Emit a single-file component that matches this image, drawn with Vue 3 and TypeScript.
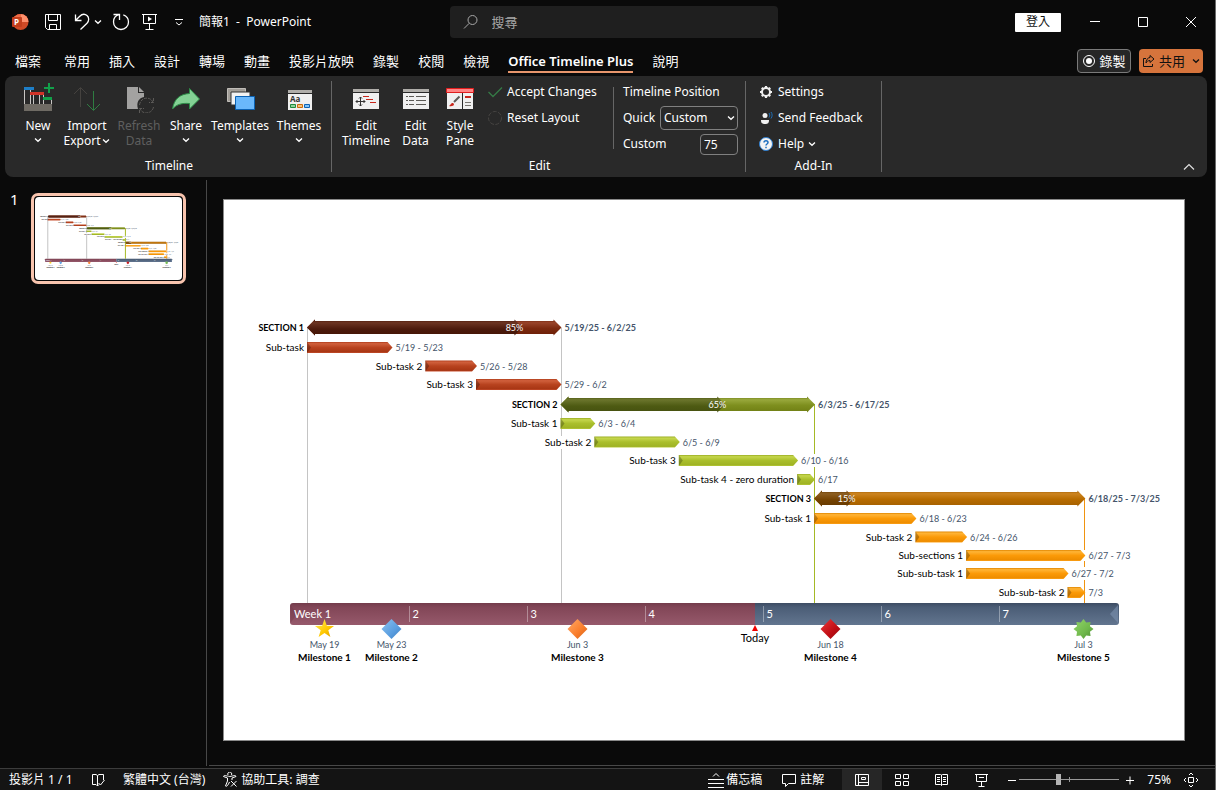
<script setup lang="ts">
import { ref } from 'vue'

interface Bar {
  label: string
  dates: string
  start: number
  days: number
  y: number
  tone: 'red' | 'green' | 'orange'
  done?: number
}

interface Milestone {
  title: string
  date: string
  x: number
  shape: string
  fill: string
}

const tabs = ['常用', '插入', '設計', '轉場', '動畫', '投影片放映', '錄製', '校閱', '檢視', 'Office Timeline Plus', '說明']
const activeTab = ref('Office Timeline Plus')
const search = ref('')
const quick = ref('Custom')
const position = ref('75')
const zoom = ref(39)

const dayWidth = 16.9
const originX = 83
const dayX = (day: number): number => originX + day * dayWidth
const endX = (b: Bar): number => dayX(b.start + b.days) + 1

const bars: Bar[] = [
  { label: 'SECTION 1', dates: '5/19/25 - 6/2/25', start: 0, days: 15, y: 127.5, tone: 'red', done: 0.85 },
  { label: 'Sub-task', dates: '5/19 - 5/23', start: 0, days: 5, y: 147.5, tone: 'red' },
  { label: 'Sub-task 2', dates: '5/26 - 5/28', start: 7, days: 3, y: 166, tone: 'red' },
  { label: 'Sub-task 3', dates: '5/29 - 6/2', start: 10, days: 5, y: 184.5, tone: 'red' },
  { label: 'SECTION 2', dates: '6/3/25 - 6/17/25', start: 15, days: 15, y: 204.5, tone: 'green', done: 0.65 },
  { label: 'Sub-task 1', dates: '6/3 - 6/4', start: 15, days: 2, y: 223.5, tone: 'green' },
  { label: 'Sub-task 2', dates: '6/5 - 6/9', start: 17, days: 5, y: 242, tone: 'green' },
  { label: 'Sub-task 3', dates: '6/10 - 6/16', start: 22, days: 7, y: 260.5, tone: 'green' },
  { label: 'Sub-task 4 - zero duration', dates: '6/17', start: 29, days: 1, y: 279.5, tone: 'green' },
  { label: 'SECTION 3', dates: '6/18/25 - 7/3/25', start: 30, days: 16, y: 298.5, tone: 'orange', done: 0.15 },
  { label: 'Sub-task 1', dates: '6/18 - 6/23', start: 30, days: 6, y: 318.5, tone: 'orange' },
  { label: 'Sub-task 2', dates: '6/24 - 6/26', start: 36, days: 3, y: 337, tone: 'orange' },
  { label: 'Sub-sections 1', dates: '6/27 - 7/3', start: 39, days: 7, y: 355.5, tone: 'orange' },
  { label: 'Sub-sub-task 1', dates: '6/27 - 7/2', start: 39, days: 6, y: 373.5, tone: 'orange' },
  { label: 'Sub-sub-task 2', dates: '7/3', start: 45, days: 1, y: 392.5, tone: 'orange' },
]

const guides = [
  { x: 83.5, tone: 'gray', spans: [[128, 403]] },
  { x: 337.5, tone: 'gray', spans: [[128, 236], [249, 403]] },
  { x: 590.5, tone: 'green', spans: [[204, 254], [267, 403]] },
  { x: 860.5, tone: 'orange', spans: [[298, 350], [361, 367], [380, 403]] },
]

const weeks = ['2', '3', '4', '5', '6', '7'].map((label, i) => ({ label, x: 185.5 + i * 118 }))

const diamond = 'M0 -10 L10 0 L0 10 L-10 0 Z'
const milestones: Milestone[] = [
  { title: 'Milestone 1', date: 'May 19', x: 100.5, shape: polygon(5, 10, 4), fill: 'url(#ms-gold)' },
  { title: 'Milestone 2', date: 'May 23', x: 167.5, shape: diamond, fill: 'url(#ms-blue)' },
  { title: 'Milestone 3', date: 'Jun 3', x: 353.5, shape: diamond, fill: 'url(#ms-orange)' },
  { title: 'Milestone 4', date: 'Jun 18', x: 606.5, shape: diamond, fill: 'url(#ms-red)' },
  { title: 'Milestone 5', date: 'Jul 3', x: 859.5, shape: polygon(8, 10, 7), fill: 'url(#ms-green)' },
]

function polygon(points: number, outer: number, inner: number): string {
  const parts: string[] = []
  for (let i = 0; i < points * 2; i++) {
    const r = i % 2 === 0 ? outer : inner
    const a = (Math.PI * i) / points - Math.PI / 2
    parts.push(`${(Math.cos(a) * r).toFixed(2)} ${(Math.sin(a) * r).toFixed(2)}`)
  }
  return `M${parts.join(' L')} Z`
}

function arrow(x1: number, x2: number, y: number): string {
  return `M${x1} ${y} L${x1 + 8} ${y - 8} V${y - 6.5} H${x2 - 8} V${y - 8} L${x2} ${y} L${x2 - 8} ${y + 8} V${y + 6.5} H${x1 + 8} V${y + 8} Z`
}

function barShape(b: Bar): string {
  const x1 = dayX(b.start)
  const x2 = endX(b)
  if (b.done !== undefined) return arrow(x1, x2, b.y)
  return `M${x1} ${b.y - 5.5} H${x2 - 5} L${x2} ${b.y} L${x2 - 5} ${b.y + 5.5} H${x1} Z`
}

function doneX(b: Bar): number {
  return dayX(b.start) + b.days * dayWidth * (b.done ?? 0)
}
</script>

<template>
  <div class="window">
    <svg class="defs" width="0" height="0" aria-hidden="true">
      <symbol id="chev" viewBox="0 0 8 6"><path d="M1 1.5 L4 4.3 L7 1.5" fill="none" stroke="currentColor" stroke-width="1.3" /></symbol>
    </svg>

    <header class="titlebar">
      <div class="quick-access">
        <svg class="logo" viewBox="0 0 18 18">
          <circle cx="9.500" cy="9" r="8" fill="#d04a26" />
          <path d="M9.500 1 A8 8 0 0 1 17.500 9 H9.500 Z" fill="#ff8f6b" />
          <path d="M1.500 9 A8 8 0 0 1 9.500 1 V9 Z" fill="#ed6c47" />
          <rect x="1" y="4" width="10" height="10" rx="1" fill="#c43e1c" />
          <text x="3" y="12" class="logo-letter">P</text>
        </svg>
        <button class="qa" aria-label="儲存"><svg viewBox="0 0 18 18" class="i18"><path d="M1.500 1.500 H16.500 V16.500 H3.500 L1.500 14.500 Z M4.500 1.500 V7.500 H13.500 V1.500 M5.500 16.500 V11.500 H12.500 V16.500" /></svg></button>
        <button class="qa" aria-label="復原"><svg viewBox="0 0 18 18" class="i18 bold"><path d="M2.500 1.500 V7.500 H8.500 M2.500 7.500 L6.500 3.500 C9 1 12 0.800 14 2.600 C16.300 4.600 16.200 7.800 14 10.200 L7.500 16.500" /></svg></button>
        <button class="qa narrow" aria-label="復原選項"><svg class="chev"><use href="#chev" /></svg></button>
        <button class="qa" aria-label="重複"><svg viewBox="0 0 18 18" class="i18 bold"><path d="M1.500 1.500 H7.500 V7 M7.300 1.700 C3.500 2.500 1.500 5.500 1.500 9 C1.500 13.200 4.800 16.500 9 16.500 C13.200 16.500 16.500 13.200 16.500 9 C16.500 5.600 14.500 2.900 11.300 1.800" /></svg></button>
        <button class="qa" aria-label="從首張投影片開始"><svg viewBox="0 0 18 18" class="i18"><path d="M1 1.500 H16 M2.500 1.500 V10.500 H14.500 V1.500 M8.500 10.500 V16.500 M4.500 16.500 H12.500" /><path class="solid" d="M7 3.500 L11 6 L7 8.500 Z" /></svg></button>
        <button class="qa" aria-label="自訂快速存取工具列"><svg viewBox="0 0 18 18" class="i18"><path d="M5 6.500 H13 M6 9.500 L9 12 L12 9.500" /></svg></button>
        <span class="doc">簡報1&nbsp; -&nbsp; PowerPoint</span>
      </div>
      <label class="search">
        <svg viewBox="0 0 16 16" class="i16"><circle cx="9.500" cy="6" r="4.500" /><path d="M6.200 9.300 L1 14.500" /></svg>
        <input v-model="search" type="text" placeholder="搜尋" aria-label="搜尋" />
      </label>
      <div class="window-controls">
        <button class="signin">登入</button>
        <button class="wc" aria-label="最小化"><svg viewBox="0 0 12 12"><path d="M1 5.500 H11" /></svg></button>
        <button class="wc" aria-label="最大化"><svg viewBox="0 0 12 12"><path d="M1.500 1.500 H10.500 V10.500 H1.500 Z" /></svg></button>
        <button class="wc" aria-label="關閉"><svg viewBox="0 0 12 12"><path d="M1 1 L11 11 M11 1 L1 11" /></svg></button>
      </div>
    </header>

    <nav class="tabs">
      <button class="tab file">檔案</button>
      <button v-for="t in tabs" :key="t" class="tab" :class="{ active: t === activeTab }" @click="activeTab = t">{{ t }}</button>
      <span class="grow"></span>
      <button class="record"><svg viewBox="0 0 14 14"><circle cx="7" cy="7" r="5.500" fill="none" stroke="#fff" /><circle cx="7" cy="7" r="3" fill="#fff" /></svg>錄製</button>
      <button class="share-btn">
        <svg viewBox="0 0 14 14"><path d="M4 4.500 H1.500 V12.500 H10.500 V10 M8 1.500 L12 5 L8 8.500 V6.500 C6 6.500 4.800 7.500 4 9 C4 6 5.500 3.800 8 3.500 Z" fill="none" stroke="#111" /></svg>共用<svg class="chev"><use href="#chev" /></svg>
      </button>
    </nav>

    <section class="ribbon">
      <div class="group timeline">
        <div class="tools">
          <button class="big w48">
            <svg viewBox="0 0 32 30">
              <path d="M2.500 7 V21 M11.500 12 V21 M17.500 12 V21 M8.500 7 V21 M29.500 17 V21 M21.500 12 V21" stroke="#c8c6c4" fill="none" />
              <path d="M2 4 H12 V7 H2 Z" fill="#1e7fc8" /><path d="M8 9 H22 V12 H8 Z" fill="#d13428" /><path d="M21 14 H30 V17 H21 Z" fill="#12a04a" />
              <path d="M2 21 H30 V28 H2 Z" fill="#6f6b64" /><path d="M27 0 V10 M22 5 H32" stroke="#12a04a" stroke-width="2" />
            </svg>
            <span>New</span><svg class="chev"><use href="#chev" /></svg>
          </button>
          <button class="big w50">
            <svg viewBox="0 0 32 30"><path d="M3 11 L9.500 4.500 L16 11 M9.500 5 V24" stroke="#45423f" fill="none" /><path d="M22.500 8 V27 M16 21 L22.500 27.500 L29 21" stroke="#2f7d42" fill="none" /></svg>
            <span>Import</span><span class="pair">Export<svg class="chev"><use href="#chev" /></svg></span>
          </button>
          <button class="big w54" disabled>
            <svg viewBox="0 0 32 30"><path d="M4 4 H15 V10 H21 V14 C16 15 13 19 15 26 H4 Z" fill="#a3a2a1" /><path d="M16 4 L21 9 H16 Z" fill="#a3a2a1" /><path d="M16.500 22 C17.500 14 27 13 30 19 M30.500 15 V19.500 H26 M30.500 24 C29 31 20 32 17 26 M16.500 30 V25.500 H21" fill="none" stroke="#5c5a58" stroke-dasharray="3 1" /></svg>
            <span>Refresh</span><span>Data</span>
          </button>
          <button class="big w40">
            <svg viewBox="0 0 32 30"><path d="M2.500 26 C4 16 10 11 19.500 10.500 V5.500 L29.500 16 L19.500 26 V20.500 C12 20 7 21 2.500 26 Z" fill="#83d194" stroke="#2c8c47" /></svg>
            <span>Share</span><svg class="chev"><use href="#chev" /></svg>
          </button>
          <button class="big w68">
            <svg viewBox="0 0 32 30"><path d="M3.500 5.500 H21.500 V18.500 H3.500 Z" fill="#a29e98" stroke="#c0bdb8" /><path d="M7 9 H26 V22 H7 Z" fill="#f2f2f2" stroke="#333" /><path d="M11.500 13.500 H30.500 V26.500 H11.500 Z" fill="#6ab8fb" stroke="#0b62b4" /></svg>
            <span>Templates</span><svg class="chev"><use href="#chev" /></svg>
          </button>
          <button class="big w50">
            <svg viewBox="0 0 32 30"><path d="M5 7 H29 V10 H5 Z" fill="#b0aeaa" /><path d="M5 11 H29 V27 H5 Z" fill="#f0f0f0" /><text x="7" y="19" class="aa">Aa</text><path d="M7.500 21.500 H12.500 V24.500 H7.500 Z" fill="#8ed29b" stroke="#1f8b3d" /><path d="M14.500 21.500 H19.500 V24.500 H14.500 Z" fill="#f4c47e" stroke="#c96a0c" /><path d="M21.500 21.500 H26.500 V24.500 H21.500 Z" fill="#83c3f7" stroke="#0b62b4" /></svg>
            <span>Themes</span><svg class="chev"><use href="#chev" /></svg>
          </button>
        </div>
        <div class="caption">Timeline</div>
      </div>

      <div class="group edit">
        <div class="tools">
          <button class="big w50">
            <svg viewBox="0 0 32 30"><path d="M3 6 H29 V9 H3 Z" fill="#b0aeaa" /><path d="M3 10 H29 V26 H3 Z" fill="#f0f0f0" /><path d="M6 18.500 H15 M10.500 14 V23 M7.500 17 L6 18.500 L7.500 20 M13.500 17 L15 18.500 L13.500 20 M9 15.500 L10.500 14 L12 15.500 M9 21.500 L10.500 23 L12 21.500" stroke="#333" fill="none" /><path d="M13 13.500 H19 M16 16.500 H23 M20 19.500 H26" stroke="#c8261b" /></svg>
            <span>Edit</span><span>Timeline</span>
          </button>
          <button class="big w49">
            <svg viewBox="0 0 32 30"><path d="M3 6 H29 V9 H3 Z" fill="#b0aeaa" /><path d="M3 10 H29 V26 H3 Z" fill="#f0f0f0" /><path d="M6 13.500 H8 M6 17.500 H8 M6 21.500 H8 M9 13.500 H14 M9 17.500 H14 M9 21.500 H14 M16 13.500 H26 M16 17.500 H26 M16 21.500 H26" stroke="#5c5a56" /></svg>
            <span>Edit</span><span>Data</span>
          </button>
          <button class="big w40">
            <svg viewBox="0 0 32 30"><path d="M3 10 H18 V26 H3 Z M19 10 H29 V26 H19 Z" fill="#f0f0f0" /><path d="M2.500 5.500 H29.500 V9.500 H2.500 Z" fill="#ff8585" stroke="#e01e1e" /><path d="M10 19 L15.500 13.500" stroke="#5c5a56" stroke-width="2" /><path d="M5 23 C7 22 6.500 20 9 20 C11 21 10 24 5 23 Z" fill="#c8261b" /><path d="M21 14 H27" stroke="#c8261b" stroke-width="2" /><path d="M21 19.500 H27 M21 22.500 H27" stroke="#77746f" /></svg>
            <span>Style</span><span>Pane</span>
          </button>
          <div class="rows">
            <button class="small"><svg viewBox="0 0 16 16"><path d="M1.500 8 L6 12.500 L15 3.500" fill="none" stroke="#357a46" stroke-width="1.300" /></svg>Accept Changes</button>
            <button class="small"><svg viewBox="0 0 16 16"><circle cx="8" cy="8" r="6.500" fill="none" stroke="#464442" stroke-dasharray="4 1.500" /></svg>Reset Layout</button>
          </div>
          <div class="position">
            <div class="prow">Timeline Position</div>
            <div class="prow">
              <label for="quick">Quick</label>
              <span class="select"><select id="quick" v-model="quick"><option>Custom</option></select><svg class="chev"><use href="#chev" /></svg></span>
            </div>
            <div class="prow"><label for="custom">Custom</label><input id="custom" v-model="position" type="text" /></div>
          </div>
        </div>
        <div class="caption">Edit</div>
      </div>

      <div class="group addin">
        <div class="rows">
          <button class="small"><svg viewBox="0 0 16 16"><circle cx="8" cy="8" r="4" fill="none" stroke="#f0f0f0" stroke-width="2" /><path d="M8 2 V4 M8 12 V14 M2 8 H4 M12 8 H14 M3.800 3.800 L5.200 5.200 M10.800 10.800 L12.200 12.200 M12.200 3.800 L10.800 5.200 M5.200 10.800 L3.800 12.200" stroke="#f0f0f0" stroke-width="2.200" /></svg>Settings</button>
          <button class="small"><svg viewBox="0 0 16 16"><circle cx="7" cy="5.500" r="2.500" fill="#f0f0f0" /><path d="M3 10 H11 C11 13 10 14 7 14 C4 14 3 13 3 10 Z" fill="#f0f0f0" /><path d="M11 3 C12 4.500 12 6 11 7.500 M13 2 C14.500 4 14.500 6.500 13 8.500" fill="none" stroke="#1e6fb8" /></svg>Send Feedback</button>
          <button class="small"><svg viewBox="0 0 16 16"><circle cx="8" cy="8" r="6.500" fill="#f4f4f4" stroke="#2b7cd0" /><path d="M6 6.500 C6 4 10 4 10 6.500 C10 8 8 8 8 9.500 M8 10.800 V12.200" fill="none" stroke="#1e6fc0" stroke-width="1.500" /></svg>Help<svg class="chev"><use href="#chev" /></svg></button>
        </div>
        <div class="caption">Add-In</div>
      </div>
      <button class="collapse" aria-label="摺疊功能區"><svg viewBox="0 0 12 8"><path d="M1 6.500 L6 1.500 L11 6.500" fill="none" stroke="#e0e0e0" stroke-width="1.200" /></svg></button>
    </section>

    <main class="workspace">
      <aside class="slides">
        <span class="number">1</span>
        <button class="thumb" aria-label="投影片 1"><svg viewBox="0 0 960 540"><use href="#slide-art" /></svg></button>
      </aside>
      <div class="stage">
        <div class="slide">
          <svg viewBox="0 0 960 540" role="img" aria-label="專案時程">
            <defs>
              <linearGradient id="bar-red" x2="0" y2="1"><stop offset="0" stop-color="#b13d1b" /><stop offset=".15" stop-color="#d0603c" /><stop offset=".5" stop-color="#b8431f" /><stop offset=".9" stop-color="#a83614" /><stop offset="1" stop-color="#c85030" /></linearGradient>
              <linearGradient id="bar-green" x2="0" y2="1"><stop offset="0" stop-color="#9aad22" /><stop offset=".15" stop-color="#c5d64c" /><stop offset=".5" stop-color="#aabf2c" /><stop offset=".9" stop-color="#9fb324" /><stop offset="1" stop-color="#b9cc3c" /></linearGradient>
              <linearGradient id="bar-orange" x2="0" y2="1"><stop offset="0" stop-color="#e08600" /><stop offset=".15" stop-color="#ffb436" /><stop offset=".5" stop-color="#fb9a08" /><stop offset=".9" stop-color="#ee8d00" /><stop offset="1" stop-color="#ffa51e" /></linearGradient>
              <linearGradient id="sec-red" x2="0" y2="1"><stop offset="0" stop-color="#6e2008" /><stop offset=".2" stop-color="#98442a" /><stop offset=".55" stop-color="#7c2a10" /><stop offset="1" stop-color="#6b1e06" /></linearGradient>
              <linearGradient id="sec-green" x2="0" y2="1"><stop offset="0" stop-color="#6c7a14" /><stop offset=".2" stop-color="#98a83c" /><stop offset=".55" stop-color="#7e8f1e" /><stop offset="1" stop-color="#6f7e14" /></linearGradient>
              <linearGradient id="sec-orange" x2="0" y2="1"><stop offset="0" stop-color="#a05c00" /><stop offset=".2" stop-color="#cc8420" /><stop offset=".55" stop-color="#b86c00" /><stop offset="1" stop-color="#a35f00" /></linearGradient>
              <linearGradient id="done-red" x2="0" y2="1"><stop offset="0" stop-color="#461405" /><stop offset=".2" stop-color="#6c3422" /><stop offset=".6" stop-color="#4c1a0c" /><stop offset="1" stop-color="#451606" /></linearGradient>
              <linearGradient id="done-green" x2="0" y2="1"><stop offset="0" stop-color="#48500c" /><stop offset=".2" stop-color="#6b752c" /><stop offset=".6" stop-color="#4d5a12" /><stop offset="1" stop-color="#465010" /></linearGradient>
              <linearGradient id="done-orange" x2="0" y2="1"><stop offset="0" stop-color="#633800" /><stop offset=".2" stop-color="#8d5e20" /><stop offset=".6" stop-color="#744200" /><stop offset="1" stop-color="#653900" /></linearGradient>
              <linearGradient id="band-past" x2="0" y2="1"><stop offset="0" stop-color="#733c4b" /><stop offset=".2" stop-color="#824657" /><stop offset="1" stop-color="#96596b" /></linearGradient>
              <linearGradient id="band-next" x2="0" y2="1"><stop offset="0" stop-color="#3d4c63" /><stop offset=".2" stop-color="#4b5d76" /><stop offset="1" stop-color="#62758f" /></linearGradient>
              <linearGradient id="ms-gold" x2="1" y2="1"><stop offset="0" stop-color="#fff05a" /><stop offset=".6" stop-color="#ffc800" /><stop offset="1" stop-color="#d89a00" /></linearGradient>
              <linearGradient id="ms-blue" x2="1" y2="1"><stop offset="0" stop-color="#8cc2f0" /><stop offset=".6" stop-color="#5a9ee0" /><stop offset="1" stop-color="#3f7fc0" /></linearGradient>
              <linearGradient id="ms-orange" x2="1" y2="1"><stop offset="0" stop-color="#ffab6a" /><stop offset=".6" stop-color="#fa7d2a" /><stop offset="1" stop-color="#d0601a" /></linearGradient>
              <linearGradient id="ms-red" x2="1" y2="1"><stop offset="0" stop-color="#ea3a3a" /><stop offset=".6" stop-color="#c00d14" /><stop offset="1" stop-color="#8c0a0e" /></linearGradient>
              <linearGradient id="ms-green" x2="1" y2="1"><stop offset="0" stop-color="#92d66a" /><stop offset=".6" stop-color="#70b84c" /><stop offset="1" stop-color="#4e9034" /></linearGradient>
            </defs>
            <g id="slide-art">
              <g v-for="g in guides" :key="g.x">
                <line v-for="s in g.spans" :key="s[0]" :x1="g.x" :x2="g.x" :y1="s[0]" :y2="s[1]" :class="['guide', g.tone]" />
              </g>
              <g v-for="b in bars" :key="b.y">
                <path :d="barShape(b)" :fill="b.done ? `url(#sec-${b.tone})` : `url(#bar-${b.tone})`" />
                <template v-if="b.done">
                  <path :d="arrow(dayX(b.start), doneX(b), b.y)" :fill="`url(#done-${b.tone})`" />
                  <text class="percent" :x="doneX(b) - 8" :y="b.y + 3.5">{{ b.done * 100 }}%</text>
                </template>
                <path v-else class="bevel" :d="`M${dayX(b.start)} ${b.y - 5.5} l4 5.5 l-4 5.5 z`" />
                <text class="label" :class="{ strong: b.done }" :x="dayX(b.start) - 3" :y="b.y + 3.5">{{ b.label }}</text>
                <text class="dates" :class="{ strong: b.done }" :x="endX(b) + 3" :y="b.y + 3.5">{{ b.dates }}</text>
              </g>
              <path d="M69 403 H532 V425 H69 Q66 425 66 422 V406 Q66 403 69 403 Z" fill="url(#band-past)" />
              <path d="M66.500 405 L73 414 L66.500 423 Z" fill="#6d3746" opacity=".35" />
              <path d="M531 403 H892 Q895 403 895 406 V422 Q895 425 892 425 H531 Z" fill="url(#band-next)" />
              <path d="M894 405 L886 414 L894 423 Z" fill="#7d92b0" opacity=".6" />
              <text class="week" x="70" y="418">Week 1</text>
              <g v-for="w in weeks" :key="w.label">
                <line :x1="w.x" :x2="w.x" y1="406" y2="422" class="tick" />
                <text class="week" :x="w.x + 3" y="418">{{ w.label }}</text>
              </g>
              <path d="M531 425 L534 431 H528 Z" fill="#f00000" />
              <text class="today" x="531" y="442">Today</text>
              <g v-for="m in milestones" :key="m.title">
                <path :d="m.shape" :transform="`translate(${m.x} 429)`" :fill="m.fill" />
                <text class="ms-date" :x="m.x" y="448">{{ m.date }}</text>
                <text class="ms-title" :x="m.x" y="461">{{ m.title }}</text>
              </g>
            </g>
          </svg>
        </div>
      </div>
    </main>

    <footer class="status">
      <span class="s-page">投影片 1 / 1</span>
      <button class="s-icon" aria-label="校對"><svg viewBox="0 0 16 16"><path d="M7.500 3.500 L6 2.500 H2.500 V12.500 H6 L7.500 14 L9 12.500 M7.500 3.500 V14 M7.500 3.500 L9 2.500 H13.500 V8 M8.500 11 L10.500 13 L14.500 8" /></svg></button>
      <button class="s-text">繁體中文 (台灣)</button>
      <button class="s-text access"><svg viewBox="0 0 16 16"><path d="M6 3 A2 2 0 1 1 9.500 3 M1.500 4.500 L5.500 6 V9 L3.500 14 M14 4.500 L10 6 V8 M1.500 4.500 C2 2.500 4 4 7.800 4.500 C11.500 4 13.500 2.500 14 4.500 M3.500 14 C5 15 6 13 7.500 10 M9 9 L14.500 14.500 M14.500 9 L9 14.500" /></svg>協助工具: 調查</button>
      <span class="grow"></span>
      <button class="s-text notes"><svg viewBox="0 0 16 16"><path d="M5 4.500 L8 1.500 L11 4.500 M0 7.500 H16 M0 11.500 H16 M0 15.500 H16" /></svg>備忘稿</button>
      <button class="s-text comments"><svg viewBox="0 0 16 16"><path d="M1.500 2.500 H14.500 V11.500 H7.500 L4.500 14.500 V11.500 H1.500 Z" /></svg>註解</button>
      <div class="views">
        <button class="view on" aria-label="標準模式"><svg viewBox="0 0 16 16"><path d="M1.500 2.500 H14.500 V13.500 H1.500 Z M4.500 2.500 V13.500 M4.500 10.500 H14.500 M7.500 5.500 H11.500 V7.500 H7.500 Z" /></svg></button>
        <button class="view" aria-label="投影片瀏覽"><svg viewBox="0 0 16 16"><path d="M1.500 2.500 H6.500 V6.500 H1.500 Z M9.500 2.500 H14.500 V6.500 H9.500 Z M1.500 9.500 H6.500 V13.500 H1.500 Z M9.500 9.500 H14.500 V13.500 H9.500 Z" /></svg></button>
        <button class="view" aria-label="閱讀檢視"><svg viewBox="0 0 16 16"><path d="M7.500 3 L6.500 2.500 H1.500 V12.500 H6.500 L7.500 13.500 L8.500 12.500 H13.500 V2.500 H8.500 L7.500 3 V13.500 M3 5.500 H6 M3 7.500 H6 M3 9.500 H6 M9 5.500 H12 M9 7.500 H12 M9 9.500 H12" /></svg></button>
        <button class="view" aria-label="投影片放映"><svg viewBox="0 0 16 16"><path d="M1 2.500 H14 M2.500 2.500 V9.500 H12.500 V2.500 M5 5.500 H10 M7.500 9.500 V14.500 M4.500 14.500 H10.500" /></svg></button>
      </div>
      <button class="step" aria-label="拉遠"><svg viewBox="0 0 10 10"><path d="M1 5.500 H9" /></svg></button>
      <input v-model="zoom" class="zoom" type="range" min="0" max="100" aria-label="縮放" />
      <button class="step plus" aria-label="拉近"><svg viewBox="0 0 10 10"><path d="M1 5.500 H9 M5 1.500 V9.500" /></svg></button>
      <button class="percent-btn">75%</button>
      <button class="s-icon fit" aria-label="調整至視窗大小"><svg viewBox="0 0 16 16"><path d="M5.500 5.500 H10.500 V10.500 H5.500 Z M6 3 L8 1 L10 3 M6 13 L8 15 L10 13 M3 6 L1 8 L3 10 M13 6 L15 8 L13 10" /></svg></button>
    </footer>
  </div>
</template>

<style>
body {
  margin: 0;
  background: #0a0a0a;
}
</style>

<style scoped>
.window {
  box-sizing: border-box;
  min-height: 100vh;
  display: flex;
  flex-direction: column;
  background: #0a0a0a;
  border-right: 1px solid #6b6b6b;
  color: #fff;
  font: 13px/16px "Noto Sans", "Noto Sans CJK TC", sans-serif;
}
.defs { position: absolute; }
button, input, select { font: inherit; color: inherit; margin: 0; padding: 0; border: 0; background: none; }
button { display: flex; align-items: center; justify-content: center; white-space: nowrap; }
svg { flex: none; display: block; }
.grow { flex: 1; }
.chev { width: 8px; height: 6px; }

.titlebar { display: grid; grid-template-columns: 37% 27% 1fr; height: 44px; align-items: center; }
.quick-access { display: flex; align-items: center; padding-left: 11px; font-size: 12px; }
.logo { width: 18px; height: 18px; margin-right: 15px; }
.logo-letter { font: bold 8px "Open Sans", sans-serif; fill: #fff; }
.qa { width: 18px; height: 28px; margin-right: 11px; }
.qa.narrow { width: 8px; margin-left: -8px; margin-right: 10px; }
.i18 { width: 18px; height: 18px; fill: none; stroke: #fff; }
.i18.bold { stroke-width: 1.3; }
.solid { fill: #fff; stroke: none; }
.search { display: flex; align-items: center; height: 32px; background: #1f1f1f; border-radius: 4px; }
.search .i16 { width: 16px; height: 16px; margin: 0 13px; fill: none; stroke: #a8a8a8; }
.search input { flex: 1; min-width: 0; outline: 0; }
.search input::placeholder { color: #a8a8a8; opacity: 1; }
.window-controls { display: flex; justify-content: flex-end; align-items: center; }
.signin { width: 46px; height: 19px; margin-right: 10px; background: #fff; color: #111; font-size: 12px; border-radius: 1px; }
.wc { width: 48px; height: 32px; }
.wc svg { width: 12px; height: 12px; fill: none; stroke: #fff; }

.tabs { box-sizing: border-box; display: flex; align-items: center; height: 32px; padding: 2px 12px 0 15px; gap: 19px; }
.tab { box-sizing: border-box; height: 24px; border-top: 2px solid transparent; border-bottom: 2px solid transparent; }
.tab.file { margin-right: 4px; }
.tab.active { font-weight: 600; border-bottom-color: #e8966c; }
.record, .share-btn { box-sizing: border-box; height: 24px; border-radius: 4px; gap: 3px; }
.record { width: 54px; border: 1px solid #7a7a7a; background: #262626; margin-right: -11px; }
.record svg, .share-btn > svg:first-child { width: 14px; height: 14px; }
.share-btn { width: 64px; background: #d6743c; color: #111; }
.share-btn .chev { margin-left: 4px; }

.ribbon { display: flex; height: 101px; margin: 0 8px 0 5px; background: #292929; border-radius: 8px; font-size: 12px; }
.group { display: flex; flex-direction: column; margin: 5px 0; border-right: 1px solid #666; }
.timeline { padding: 0 7px 0 9px; }
.edit { padding: 0 7px 0 9px; }
.tools { display: flex; flex: 1; }
.caption { height: 16px; margin-bottom: -2px; text-align: center; }
.big { flex-direction: column; justify-content: flex-start; line-height: 15px; align-self: flex-start; padding-top: 2px; }
.big > svg:first-child { width: 32px; height: 30px; margin-bottom: 5px; }
.big > .chev { margin-top: 4px; }
.big:disabled { color: #5f5f5f; }
.pair { display: flex; align-items: center; gap: 2px; }
.w40 { width: 40px; } .w48 { width: 48px; } .w49 { width: 49px; } .w50 { width: 50px; } .w54 { width: 54px; } .w68 { width: 68px; }
.aa { font: bold 8px "Open Sans", sans-serif; fill: #333; }
.rows { display: flex; flex-direction: column; align-items: flex-start; gap: 4px; }
.edit .rows { margin-left: 7px; width: 126px; }
.small { height: 22px; gap: 4px; }
.small svg:first-child { width: 16px; height: 16px; }
.position { align-self: flex-start; height: 62px; margin-top: 6px; padding-left: 9px; border-left: 1px solid #666; }
.prow { display: flex; align-items: center; justify-content: space-between; width: 115px; height: 22px; margin-bottom: 4px; }
.prow:first-child { margin-top: -6px; }
.select { position: relative; display: block; }
.select select { display: block; box-sizing: border-box; width: 78px; height: 24px; padding-left: 3px; border: 1px solid #808080; border-radius: 4px; appearance: none; }
.select .chev { position: absolute; right: 3px; top: 9px; }
.prow input { box-sizing: border-box; width: 38px; height: 21px; padding-left: 3px; border: 1px solid #808080; border-radius: 4px; }
.addin { width: 135px; }
.addin .rows { margin-left: 12px; flex: 1; }
.collapse { align-self: flex-end; width: 24px; height: 20px; margin: 0 6px 0 auto; }
.collapse svg { width: 12px; height: 8px; }

.workspace { display: flex; flex: 1; margin-top: 3px; }
.slides { box-sizing: border-box; display: flex; align-items: flex-start; flex: none; width: 207px; padding: 13px 0 0 10px; border-right: 1px solid #484848; }
.number { width: 21px; font-size: 15px; line-height: 13px; }
.thumb { box-sizing: border-box; width: 155px; padding: 1px; border: 3px solid #f8c4ae; border-radius: 7px; }
.thumb svg { width: 100%; background: #fff; border-radius: 4px; }
.stage { flex: 1; min-width: 0; margin-left: 2px; padding: 19px 30px 0 14px; border-bottom: 1px solid #484848; }
.slide { background: #fff; border: 1px solid #8a8a8a; }
.slide svg { width: 100%; }

.guide { stroke-width: 1; stroke: #c4c4c4; vector-effect: non-scaling-stroke; }
.guide.green { stroke: #a5b925; }
.guide.orange { stroke: #f09410; }
.label, .dates, .percent, .week, .today, .ms-date, .ms-title { font-family: Lato, sans-serif; font-size: 9px; }
.label { text-anchor: end; fill: #000; font-size: 10px; }
.label.strong { font-size: 9px; }
.dates { fill: #44546a; }
.strong { font-weight: 700; }
.percent { text-anchor: middle; fill: #fff; }
.bevel { fill: #000; opacity: .25; }
.week { font-size: 11px; fill: #fff; }
.tick { stroke: #fff; opacity: .35; }
.today { font-size: 11px; text-anchor: middle; }
.ms-date { text-anchor: middle; fill: #44546a; }
.ms-title { font-size: 10px; text-anchor: middle; font-weight: 700; }

.status { display: flex; align-items: center; height: 21px; margin-top: 2px; padding: 0 16px 0 9px; background: #141414; border-top: 1px solid #3c3c3c; font-size: 12px; }
.status svg { width: 16px; height: 16px; fill: none; stroke: #fff; }
.s-page { width: 81px; }
.s-icon { width: 16px; height: 20px; }
.s-text { height: 20px; margin-left: 17px; gap: 3px; }
.notes { margin-left: 0; gap: 2px; }
.comments { margin-left: 19px; margin-right: 18px; }
.views { display: flex; }
.view { width: 40px; height: 21px; }
.view.on { background: #262626; }
.status .step { width: 14px; height: 20px; }
.status .step svg { width: 10px; height: 10px; }
.views + .step { margin-left: 3px; }
.step.plus { margin-left: 4px; }
.zoom { appearance: none; width: 100px; height: 12px; outline: 0; background: linear-gradient(#999, #999) 50% 50% / 1px 5px no-repeat, linear-gradient(#999, #999) 0 50% / 100% 1px no-repeat; }
.zoom::-webkit-slider-thumb { appearance: none; width: 5px; height: 11px; background: #b4b4b4; }
.percent-btn { margin: 0 12px 0 10px; }
</style>
